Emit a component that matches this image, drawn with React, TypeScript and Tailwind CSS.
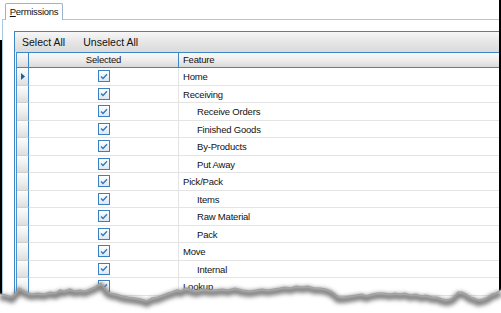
import React from 'react';

interface Row {
  name: string;
  indent: boolean;
}

const rows: Row[] = [
  { name: 'Home', indent: false },
  { name: 'Receiving', indent: false },
  { name: 'Receive Orders', indent: true },
  { name: 'Finished Goods', indent: true },
  { name: 'By-Products', indent: true },
  { name: 'Put Away', indent: true },
  { name: 'Pick/Pack', indent: false },
  { name: 'Items', indent: true },
  { name: 'Raw Material', indent: true },
  { name: 'Pack', indent: true },
  { name: 'Move', indent: false },
  { name: 'Internal', indent: true },
  { name: 'Lookup', indent: false },
  { name: 'Inventory', indent: true },
];

const CheckBox = () => (
  <div className="w-[12px] h-[12px] border border-[#3c7fc0] bg-gradient-to-b from-[#ffffff] to-[#dce7f2] flex items-center justify-center">
    <svg width="8" height="7" viewBox="0 0 8 7">
      <path d="M1 3.5 L3 5.5 L7 1.2" fill="none" stroke="#2f77bd" strokeWidth="1.3" />
    </svg>
  </div>
);

// jagged torn-paper line across the bottom of the shot
const tear =
  '0,294 6,295 12,297 16,293 19,288 22,290 26,292 31,294 38,293 44,294 50,292 56,293 60,290 64,291 70,289 74,291 80,290 85,291 90,289 95,287 98,285 101,283 104,287 107,291 110,293 116,294 122,296 128,297 135,298 141,299 147,301 152,298 158,297 163,295 168,293 172,292 177,290 181,291 186,288 192,290 197,291 203,289 209,290 215,290 222,289 228,290 235,288 242,290 250,291 256,290 262,289 268,290 274,289 280,288 285,287 291,288 296,286 302,287 308,286 314,288 320,288 326,289 331,291 335,294 338,297 344,297 350,296 356,295 362,294 366,296 372,294 378,293 384,293 390,294 395,293 400,294 405,293 410,295 416,294 421,296 426,295 432,297 437,297 442,299 447,300 451,299 455,296 458,292 462,292 466,294 470,297 474,298 478,300 483,299 488,297 492,294 496,293 501,290';

const App = () => {
  return (
    <div className="relative w-[501px] h-[313px] overflow-hidden bg-white font-['Liberation_Sans',Arial,sans-serif] text-[#111]">
      {/* window frame edges */}
      <div className="absolute left-0 top-[40px] w-[2px] h-[260px] bg-black" />
      <div className="absolute right-0 top-0 w-[2px] h-[300px] bg-black" />

      {/* tab strip */}
      <div className="h-[19px] pl-[5px] pt-[3px] flex">
        <div className="w-[58px] h-[17px] border border-b-0 border-[#9bb4c9] rounded-t-[2px] bg-white flex items-center justify-center text-[9.5px] tracking-[-0.3px] pt-[1px]">
          <span>
            <span className="underline">P</span>ermissions
          </span>
        </div>
      </div>

      {/* tab page */}
      <div className="ml-[2px] mr-[2px] border-t border-l border-[#a9c8e2] pt-[11px] pl-[11px]">
        <div className="border-t border-l border-[#3d86c6]">
          {/* toolbar */}
          <div className="h-[20px] flex items-center gap-[18px] pl-[7px] pt-[1px] text-[10.5px] bg-gradient-to-b from-[#f7f7f7] via-[#e6e6e6] to-[#dadada]">
            <span>Select All</span>
            <span>Unselect All</span>
          </div>

          {/* grid */}
          <div className="ml-[1px] border-l border-[#4a90cc] text-[9.5px] tracking-[-0.2px]">
            <div className="flex h-[16px] border-t border-b border-[#3d86c6] bg-gradient-to-b from-[#f9f9f9] via-[#ededed] to-[#dadada]">
              <div className="w-[12px] border-r border-[#3d86c6]" />
              <div className="w-[150px] border-r border-[#3d86c6] flex items-center justify-center pt-[1px]">Selected</div>
              <div className="flex-1 flex items-center pl-[4px] pt-[1px]">Feature</div>
            </div>

            {rows.map((row, i) => (
              <div key={row.name} className="flex h-[17.5px]">
                <div className="w-[12px] border-r border-b border-r-[#4a90cc] border-b-[#cfcfcf] bg-gradient-to-b from-[#fcfcfc] via-[#efefef] to-[#dedede] flex items-center justify-center">
                  {i === 0 && (
                    <svg width="4" height="7" viewBox="0 0 4 7">
                      <path d="M0 0 L4 3.5 L0 7 Z" fill="#1f5f9e" />
                    </svg>
                  )}
                </div>
                <div className="w-[150px] border-r border-b border-[#e4e4e4] flex items-center justify-center">
                  <CheckBox />
                </div>
                <div className={`flex-1 border-b border-[#e4e4e4] flex items-center pt-[2px] ${row.indent ? 'pl-[18px]' : 'pl-[4px]'}`}>
                  {row.name}
                </div>
              </div>
            ))}
          </div>
        </div>
      </div>

      {/* torn bottom edge */}
      <svg className="absolute left-0 top-0" width="501" height="313" viewBox="0 0 501 313">
        <defs>
          <filter id="soft" x="-5%" y="-50%" width="110%" height="200%">
            <feGaussianBlur stdDeviation="2" />
          </filter>
        </defs>
        <polygon points={`${tear} 501,313 0,313`} fill="#ffffff" />
        <polyline points={tear} fill="none" stroke="#7a7a7a" strokeWidth="6" filter="url(#soft)" transform="translate(0,3)" />
        <polyline points={tear} fill="none" stroke="#a0a0a0" strokeWidth="1.2" />
      </svg>
    </div>
  );
};

export default App;
